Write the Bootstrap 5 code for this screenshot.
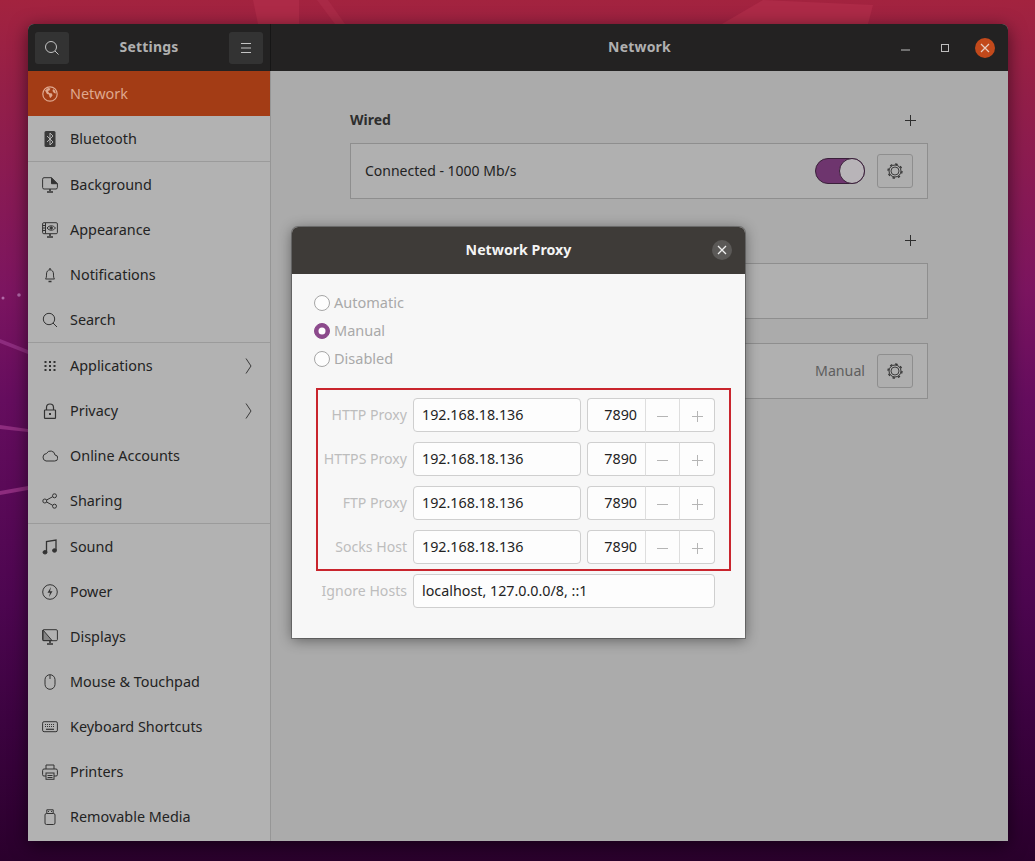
<!DOCTYPE html>
<html lang="en"><head><meta charset="utf-8"><title>Settings</title>
<link rel="stylesheet" href="https://cdn.jsdelivr.net/npm/bootstrap@5.3.0/dist/css/bootstrap.min.css">
<script src="https://cdn.jsdelivr.net/npm/bootstrap@5.3.0/dist/js/bootstrap.bundle.min.js"></script>
<style>
html,body{height:861px;overflow:hidden}
body{position:relative;margin:0;font-family:"Noto Sans","Open Sans",sans-serif;font-size:14.5px;color:#232323;
 background:linear-gradient(180deg,#a3233f 0,#941f48 90px,#7c1560 290px,#650d5e 400px,#4d0650 600px,#3c0340 720px,#2a002c 861px)}
.wall{position:absolute;left:0;top:0;width:1035px;height:861px}
.gwin{position:absolute;left:28px;top:24px;width:980px;height:817px;background:#ababab;border-radius:6px 6px 0 0;box-shadow:0 4px 18px rgba(0,0,0,.55);overflow:hidden}
.ghead{height:47px;background:#232222;color:#b0b0b0}
.ghead-l{width:243px;padding:0 7px;border-right:1px solid #161616}
.ttl{font-weight:700;font-size:14px;letter-spacing:.2px;padding-bottom:2px}
.hbtn{width:34px;height:32px;padding:0;background:#333;border:0;border-radius:3px;line-height:1}
.hbtn:hover{background:#333}
.wctl{width:120px;margin-left:-120px;padding-right:13px;flex:none}
.wmin{margin-right:31px;margin-top:4px}
.wmax{margin-right:26px}
.wclose{width:20px;height:20px;background:#c2491b;border-radius:50%}
.gaside{width:243px;height:770px;background:#b2b2b2;border-right:1px solid #969696}
.gitem{height:45px;padding:0 18px 0 14px;background:transparent;border:0;border-radius:0!important;color:#232323;font-size:14.4px}
.gitem.sepd{height:46px;border-top:1px solid #9b9b9b!important}
.gitem.cur{background:#a33c15;color:#dfa88f}
.gitem svg.ic{width:16px;height:16px;margin-right:12px;flex:none}
.gmain{padding:0 80px 0 79px}
.sec-h{height:72px;padding:0 12px 13px 0;font-weight:700;font-size:14px;color:#2e2e2e}
.sec-p{margin-bottom:4px}
.sec-a{height:64px;padding:0 12px 17px 0}
.gbox{height:56px;border:1px solid #8e8e8e;background:#b0b0b0;border-radius:0;padding:0 14px}
.gtxt{font-size:14px;color:#232323;padding-bottom:2px}
.gsw{width:50px;height:26px;background:#6e356e;border:1px solid #3a203a;border-radius:13px;position:relative;margin-right:12px}
.gknob{position:absolute;right:-1px;top:-1px;width:26px;height:26px;background:#b8b4b8;border:1px solid #3a203a;border-radius:50%}
.gbtn{width:36px;height:34px;padding:0;background:#aeaeae;border:1px solid #8e8e8e;border-radius:3px;line-height:1}
.gbtn:hover{background:#aeaeae;border-color:#8e8e8e}
.gmanual{color:#5e5e5e;margin-right:12px;font-size:14.2px}
.gdlg{position:absolute;left:264px;top:203px;width:453px;height:411px;background:#f7f7f7;border-radius:6px 6px 0 0;box-shadow:0 2px 14px rgba(0,0,0,.45),0 0 0 1px rgba(90,90,90,.55);color:#a9a9a9}
.gdlg-h{height:47px;background:#3e3b38;color:#f4f4f4;font-weight:700;font-size:14.2px;border-radius:6px 6px 0 0;position:relative;padding-bottom:2px}
.gdlg-x{position:absolute;right:13px;top:13px;width:20px;height:20px;background:#5b5957;border-radius:50%;padding:0;border:0;line-height:1}
.gdlg-b{padding:15px 30px 0 24px}
.gradio{height:28px;margin:0 0 0 -2px;padding:0;min-height:0;gap:4px;font-size:14.5px;color:#a9a9a9}
.gradio .form-check-input{float:none;margin:0;width:16px;height:16px;background-color:#fdfdfd;border:1px solid #a6a6a6;opacity:1}
.gradio .form-check-input:checked{background-color:#8c4a8c;border-color:#8c4a8c}
.gradio .form-check-label{opacity:1!important;color:#a9a9a9}
.gred{border:2px solid #c9252d;margin:15px -16px 3px 0;padding:8px 14px 5px 0;display:flex;flex-direction:column;gap:10px}
.grow{height:34px;gap:6px}
.glab{width:89px;flex:none;text-align:right;color:#bdbdbd;font-size:14.1px;white-space:nowrap}
.gignore{padding-left:2px}
.gipt{height:34px;padding:0 8px 2px;font-size:14.3px;color:#232323;background:#fdfdfd;border:1px solid #cfcfcf;border-radius:4px;font-family:inherit}
.gipt.host{width:168px;flex:none}
.gspin{width:128px;flex:none;flex-wrap:nowrap}
.gspin .gipt{width:58px!important;flex:none;text-align:right;border-right:0}
.gspin .gs{width:35px;height:34px;flex:none;padding:0;background:#fdfdfd;border:1px solid #dedede;border-radius:0;border-top-color:#cfcfcf;border-bottom-color:#cfcfcf;line-height:1;margin-left:0!important}
.gspin .gs+.gs{width:35px;border-left:0;border-right-color:#cfcfcf;border-radius:0 4px 4px 0}
.gignore .gipt{width:302px;flex:none}
</style></head>
<body>
<svg class="wall" viewBox="0 0 1035 861" aria-hidden="true">
<polygon points="253,0 299,0 299,24 258,24" fill="#ad2a47"/>
<polygon points="317,0 328,0 345,24 335,24" fill="#a92946"/>
<polygon points="763,0 873,5 868,24 722,24" fill="#ad2a47"/>
<polygon points="0,339 28,350 28,354 0,343" fill="#8d2c7e"/>
<polygon points="0,425 28,429 28,432 0,429" fill="#8d2c7e"/>
<polygon points="0,491 28,486 28,490 0,495" fill="#8d2c7e"/>
<circle cx="3" cy="298" r="1.500" fill="#b16aa8"/><circle cx="19" cy="295" r="1.800" fill="#b16aa8"/>
</svg>
<div class="gwin">
 <div class="ghead d-flex">
  <div class="ghead-l d-flex align-items-center justify-content-between">
   <button class="btn hbtn d-flex align-items-center justify-content-center"><svg width="16" height="16" viewBox="0 0 16 16" fill="none" stroke="#c4c4c4" stroke-width="1"><circle cx="7" cy="7" r="5.500"/><path d="M11 11l3.500 3.500"/></svg></button>
   <span class="ttl">Settings</span>
   <button class="btn hbtn d-flex align-items-center justify-content-center"><svg width="12" height="12" viewBox="0 0 12 12" stroke="#c4c4c4"><path d="M1 1.500h10M1 6h10M1 10.500h10"/></svg></button>
  </div>
  <div class="flex-grow-1 d-flex align-items-center">
   <span class="ttl flex-grow-1 text-center">Network</span>
   <div class="wctl d-flex align-items-center justify-content-end">
    <svg width="9" height="2" viewBox="0 0 9 2" class="wmin" stroke="#bdbdbd"><path d="M0 1h9"/></svg>
    <svg width="8" height="8" viewBox="0 0 8 8" fill="none" stroke="#bdbdbd" class="wmax"><rect x=".5" y=".5" width="7" height="7"/></svg>
    <span class="wclose d-flex align-items-center justify-content-center"><svg width="10" height="10" viewBox="0 0 10 10" stroke="#e8cfc4" stroke-width="1.200"><path d="M1 1l8 8M9 1l-8 8"/></svg></span>
   </div>
  </div>
 </div>
 <div class="d-flex">
  <div class="gaside list-group list-group-flush">
   <a class="list-group-item gitem cur d-flex align-items-center"><svg class="ic" viewBox="0 0 16 16" fill="none"><circle cx="8" cy="8" r="7.200" stroke="#dfa88f" stroke-width="1.200"/><path d="M3 4.500l3-2.500 2.500.5-1 2-1.500.5 1 2 3 .5.500 2-2 2.500-1-1-.5-2.500-2-.5zM11 3l2 1.500 1 3-2-.5-1.500-2z" fill="#dfa88f"/></svg>Network</a>
   <a class="list-group-item gitem d-flex align-items-center"><svg class="ic" viewBox="0 0 16 16"><rect x="2.500" y="0" width="11" height="16" rx="1.500" fill="#3a3a3a"/><path d="M5 5l6 6-3 3V2l3 3-6 6" fill="none" stroke="#b2b2b2"/></svg>Bluetooth</a>
   <a class="list-group-item gitem sepd d-flex align-items-center"><svg class="ic" viewBox="0 0 16 16" fill="none" stroke="#333"><path d="M9.500.7H2A1.500 1.500 0 0 0 .6 2.200v8.300A1.500 1.500 0 0 0 2 12h12a1.500 1.500 0 0 0 1.400-1.500V7"/><path d="M9.500.7l6 6h-6z" fill="#333"/><path d="M8 12v2M5 15h6" stroke-width="1.600"/></svg>Background</a>
   <a class="list-group-item gitem d-flex align-items-center"><svg class="ic" viewBox="0 0 16 16" fill="none" stroke="#333"><rect x=".6" y=".7" width="14.800" height="11" rx="1.200"/><path d="M3.500 1v10.500M.8 3.500h2.700M.8 6h2.700M.8 8.500h2.700"/><path d="M5 6c2.500-3 6-3 8.500 0-2.500 3-6 3-8.500 0z"/><circle cx="9.200" cy="6" r="1.200" fill="#333"/><path d="M8 12v2M5 15h6" stroke-width="1.600"/></svg>Appearance</a>
   <a class="list-group-item gitem d-flex align-items-center"><svg class="ic" viewBox="0 0 16 16" fill="none" stroke="#333"><path d="M3.500 12c.8-1 1-2 1-5 0-2.500 1.500-4.200 3.500-4.200s3.500 1.700 3.500 4.200c0 3 .2 4 1 5z"/><path d="M8 1v1.800M6.500 14.500h3" stroke-width="1.300"/></svg>Notifications</a>
   <a class="list-group-item gitem d-flex align-items-center"><svg class="ic" viewBox="0 0 16 16" fill="none" stroke="#333"><circle cx="7" cy="7" r="5.700"/><path d="M11 11l4 4"/></svg>Search</a>
   <a class="list-group-item gitem sepd d-flex align-items-center"><svg class="ic" viewBox="0 0 16 16" fill="#333"><rect x="2.500" y="3" width="2" height="2"/><rect x="7" y="3" width="2" height="2"/><rect x="11.500" y="3" width="2" height="2"/><rect x="2.500" y="7" width="2" height="2"/><rect x="7" y="7" width="2" height="2"/><rect x="11.500" y="7" width="2" height="2"/><rect x="2.500" y="11" width="2" height="2"/><rect x="7" y="11" width="2" height="2"/><rect x="11.500" y="11" width="2" height="2"/></svg>Applications<svg class="ms-auto" width="7" height="16" viewBox="0 0 7 16" fill="none" stroke="#3a3a3a"><path d="M1 .5l5 7.500-5 7.500"/></svg></a>
   <a class="list-group-item gitem d-flex align-items-center"><svg class="ic" viewBox="0 0 16 16" fill="none" stroke="#333"><rect x="2.500" y="7" width="11" height="8.300" rx=".6" stroke-width="1.200"/><path d="M4.500 7V4.500a3.500 3.500 0 0 1 7 0V7" stroke-width="1.200"/><rect x="7" y="10" width="2" height="2" fill="#333" stroke="none"/></svg>Privacy<svg class="ms-auto" width="7" height="16" viewBox="0 0 7 16" fill="none" stroke="#3a3a3a"><path d="M1 .5l5 7.500-5 7.500"/></svg></a>
   <a class="list-group-item gitem d-flex align-items-center"><svg class="ic" viewBox="0 0 16 16" fill="none" stroke="#333"><path d="M4 13h8.500a3 3 0 0 0 .5-6 4.500 4.500 0 0 0-8.500-1.500A3.800 3.800 0 0 0 4 13z"/></svg>Online Accounts</a>
   <a class="list-group-item gitem d-flex align-items-center"><svg class="ic" viewBox="0 0 16 16" fill="none" stroke="#333"><circle cx="2.800" cy="8" r="2"/><circle cx="12.500" cy="2.800" r="2"/><circle cx="12.500" cy="13.200" r="2"/><path d="M4.600 7l6.100-3.300M4.600 9l6.100 3.300"/></svg>Sharing</a>
   <a class="list-group-item gitem sepd d-flex align-items-center"><svg class="ic" viewBox="0 0 16 16" fill="none" stroke="#333"><path d="M4.500 13V2.500L14 1v10" stroke-width="1.300"/><ellipse cx="3" cy="13.300" rx="2" ry="1.700" fill="#333"/><ellipse cx="12.500" cy="11.500" rx="2" ry="1.700" fill="#333"/></svg>Sound</a>
   <a class="list-group-item gitem d-flex align-items-center"><svg class="ic" viewBox="0 0 16 16" fill="none" stroke="#333"><circle cx="8" cy="8" r="7.300"/><path d="M9 3L5.500 8.800H8L7 13l3.500-5.800H8z" fill="#333" stroke="none"/></svg>Power</a>
   <a class="list-group-item gitem d-flex align-items-center"><svg class="ic" viewBox="0 0 16 16" fill="none" stroke="#333"><rect x=".6" y=".7" width="14.800" height="11" rx="1.200"/><path d="M1 1l9 10.500H1z" fill="#333" fill-opacity=".35"/><path d="M8 12v2M5 15h6" stroke-width="1.600"/></svg>Displays</a>
   <a class="list-group-item gitem d-flex align-items-center"><svg class="ic" viewBox="0 0 16 16" fill="none" stroke="#333"><rect x="3" y=".7" width="10" height="14.600" rx="5"/><path d="M8 1v4"/></svg>Mouse &amp; Touchpad</a>
   <a class="list-group-item gitem d-flex align-items-center"><svg class="ic" viewBox="0 0 16 16" fill="none" stroke="#333"><rect x=".6" y="2.700" width="14.800" height="10" rx="1.500"/><path d="M3 5.500h10M3 7.500h10" stroke-dasharray="1 1" stroke-width="1.200"/><path d="M4 10.300h8" stroke-width="1.200"/></svg>Keyboard Shortcuts</a>
   <a class="list-group-item gitem d-flex align-items-center"><svg class="ic" viewBox="0 0 16 16" fill="none" stroke="#333"><path d="M4 5V1h8v4"/><path d="M4 12H2a1.300 1.300 0 0 1-1.400-1.300V6.500A1.500 1.500 0 0 1 2 5h12a1.500 1.500 0 0 1 1.400 1.500v4.200A1.300 1.300 0 0 1 14 12h-2"/><rect x="4" y="9" width="8" height="6.300"/><path d="M5.500 11.500h5M5.500 13.500h5"/></svg>Printers</a>
   <a class="list-group-item gitem d-flex align-items-center"><svg class="ic" viewBox="0 0 16 16" fill="none" stroke="#333"><rect x="3" y="4.500" width="10" height="11" rx="1.500"/><path d="M4.800 4.500V.8h6.400v3.700"/><path d="M6 2.500h1M9 2.500h1"/></svg>Removable Media</a>
  </div>
  <div class="gmain flex-grow-1">
   <div class="sec-h d-flex align-items-end justify-content-between"><span>Wired</span><svg width="11" height="11" viewBox="0 0 11 11" stroke="#2e2e2e" class="sec-p"><path d="M5.500 0v11M0 5.500h11"/></svg></div>
   <div class="gbox d-flex align-items-center"><span class="gtxt me-auto">Connected - 1000 Mb/s</span><div class="gsw"><div class="gknob"></div></div><button class="btn gbtn d-flex align-items-center justify-content-center"><svg width="18" height="18" viewBox="0 0 18 18" fill="none" stroke="#333"><circle cx="9" cy="9" r="4" stroke-width=".9"/><circle cx="9" cy="9" r="6" stroke-width="1"/><circle cx="9" cy="9" r="7" stroke-width="1.300" stroke-dasharray="2.500 3"/></svg></button></div>
   <div class="sec-a d-flex align-items-end justify-content-end"><svg width="11" height="11" viewBox="0 0 11 11" stroke="#2e2e2e"><path d="M5.500 0v11M0 5.500h11"/></svg></div>
   <div class="gbox"></div>
   <div class="gbox d-flex align-items-center justify-content-end mt-4"><span class="gmanual">Manual</span><button class="btn gbtn d-flex align-items-center justify-content-center"><svg width="18" height="18" viewBox="0 0 18 18" fill="none" stroke="#333"><circle cx="9" cy="9" r="4" stroke-width=".9"/><circle cx="9" cy="9" r="6" stroke-width="1"/><circle cx="9" cy="9" r="7" stroke-width="1.300" stroke-dasharray="2.500 3"/></svg></button></div>
  </div>
 </div>
 <div class="gdlg">
  <div class="gdlg-h d-flex align-items-center justify-content-center">Network Proxy<button class="btn gdlg-x d-flex align-items-center justify-content-center"><svg width="10" height="10" viewBox="0 0 10 10" stroke="#f0f0f0" stroke-width="1.300"><path d="M1 1l8 8M9 1l-8 8"/></svg></button></div>
  <div class="gdlg-b">
   <div class="form-check gradio d-flex align-items-center"><input class="form-check-input" type="radio" name="m" id="r1" disabled><label class="form-check-label" for="r1">Automatic</label></div>
   <div class="form-check gradio d-flex align-items-center"><input class="form-check-input" type="radio" name="m" id="r2" checked disabled><label class="form-check-label" for="r2">Manual</label></div>
   <div class="form-check gradio d-flex align-items-center"><input class="form-check-input" type="radio" name="m" id="r3" disabled><label class="form-check-label" for="r3">Disabled</label></div>
   <div class="gred">
    <div class="grow d-flex align-items-center"><span class="glab">HTTP Proxy</span><input class="form-control gipt host" value="192.168.18.136"><div class="input-group gspin"><input class="form-control gipt" value="7890"><button class="btn gs"><svg width="11" height="11" viewBox="0 0 11 11" stroke="#b5b5b5"><path d="M0 5.500h11"/></svg></button><button class="btn gs"><svg width="11" height="11" viewBox="0 0 11 11" stroke="#b5b5b5"><path d="M5.500 0v11M0 5.500h11"/></svg></button></div></div>
    <div class="grow d-flex align-items-center"><span class="glab">HTTPS Proxy</span><input class="form-control gipt host" value="192.168.18.136"><div class="input-group gspin"><input class="form-control gipt" value="7890"><button class="btn gs"><svg width="11" height="11" viewBox="0 0 11 11" stroke="#b5b5b5"><path d="M0 5.500h11"/></svg></button><button class="btn gs"><svg width="11" height="11" viewBox="0 0 11 11" stroke="#b5b5b5"><path d="M5.500 0v11M0 5.500h11"/></svg></button></div></div>
    <div class="grow d-flex align-items-center"><span class="glab">FTP Proxy</span><input class="form-control gipt host" value="192.168.18.136"><div class="input-group gspin"><input class="form-control gipt" value="7890"><button class="btn gs"><svg width="11" height="11" viewBox="0 0 11 11" stroke="#b5b5b5"><path d="M0 5.500h11"/></svg></button><button class="btn gs"><svg width="11" height="11" viewBox="0 0 11 11" stroke="#b5b5b5"><path d="M5.500 0v11M0 5.500h11"/></svg></button></div></div>
    <div class="grow d-flex align-items-center"><span class="glab">Socks Host</span><input class="form-control gipt host" value="192.168.18.136"><div class="input-group gspin"><input class="form-control gipt" value="7890"><button class="btn gs"><svg width="11" height="11" viewBox="0 0 11 11" stroke="#b5b5b5"><path d="M0 5.500h11"/></svg></button><button class="btn gs"><svg width="11" height="11" viewBox="0 0 11 11" stroke="#b5b5b5"><path d="M5.500 0v11M0 5.500h11"/></svg></button></div></div>
   </div>
   <div class="grow gignore d-flex align-items-center"><span class="glab">Ignore Hosts</span><input class="form-control gipt" value="localhost, 127.0.0.0/8, ::1"></div>
  </div>
 </div>
</div>
</body></html>
